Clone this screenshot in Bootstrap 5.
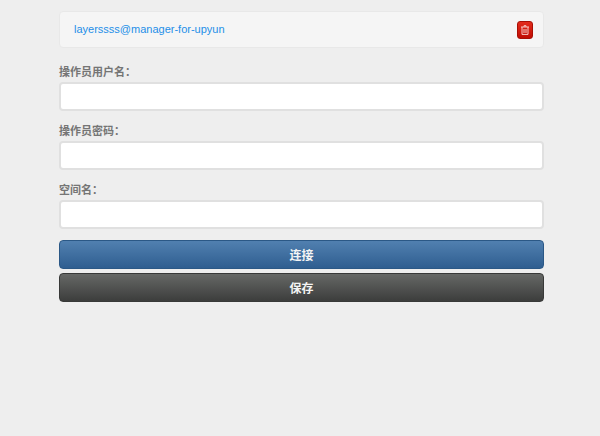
<!DOCTYPE html>
<html lang="zh">
<head>
<meta charset="utf-8">
<title>Upyun</title>
<link rel="stylesheet" href="https://cdn.jsdelivr.net/npm/bootstrap@5.3.0/dist/css/bootstrap.min.css">
<style>
html,body{height:100%;}
body{background:#eeeeee;font-family:"Liberation Sans","Noto Sans CJK SC",sans-serif;font-size:12px;overflow:hidden;}
.shell{width:485px;margin-left:59px;padding-top:11px;}
.acct{height:37px;background:#f5f5f5;border:1px solid #e8e8e8;border-radius:4px;padding:0 10px 0 14px;}
.acct a{color:#1e8fe8;text-decoration:none;font-size:11px;font-family:"Liberation Sans",sans-serif;}
.trash{width:16px;height:18px;padding:0;border:1px solid #a80f05;border-radius:3px;background:linear-gradient(#e32c1c,#c00d03);display:flex;align-items:center;justify-content:center;}
.lbl{display:block;font-weight:700;color:#757575;font-size:11px;line-height:16px;margin:0 0 3px;font-family:"Noto Sans CJK SC",sans-serif;}
.fld{height:29px;background:#fff;border:2px solid #e0e0e0;border-radius:4px;padding:0 8px;box-shadow:none;}
.fld:focus{border-color:#ccc;box-shadow:none;}
.grp{margin-bottom:11px;}
.act{height:29px;padding:0;color:#f4f4f4;font-weight:700;font-size:12px;border-radius:4px;font-family:"Noto Sans CJK SC",sans-serif;line-height:26px;}
.act-blue{background:linear-gradient(#5180b0,#2f5e90);border:1px solid #2b5886;}
.act-dark{background:linear-gradient(#666866,#3c3d3c);border:1px solid #383938;}
.act:hover{color:#fff;}
.frm{margin-top:15px;}
.btn-stack{gap:4px;}
</style>
</head>
<body>
<div class="shell">
  <div class="acct d-flex align-items-center justify-content-between">
    <a href="#">layerssss@manager-for-upyun</a>
    <button class="trash" type="button" aria-label="删除">
      <svg width="8" height="10" viewBox="0 0 8 10" fill="none" stroke="#f6c9c4" stroke-width="1"><path d="M0 2h8M3 2V.7h2V2M1 2v7.4h6V2M3 4v4M5 4v4"/></svg>
    </button>
  </div>
  <form class="frm">
    <div class="grp">
      <label class="lbl">操作员用户名：</label>
      <input class="form-control fld" type="text">
    </div>
    <div class="grp">
      <label class="lbl">操作员密码：</label>
      <input class="form-control fld" type="password">
    </div>
    <div class="grp">
      <label class="lbl">空间名：</label>
      <input class="form-control fld" type="text">
    </div>
    <div class="d-grid btn-stack">
      <button class="btn act act-blue" type="button">连接</button>
      <button class="btn act act-dark" type="button">保存</button>
    </div>
  </form>
</div>
<script src="https://cdn.jsdelivr.net/npm/bootstrap@5.3.0/dist/js/bootstrap.bundle.min.js"></script>
</body>
</html>
